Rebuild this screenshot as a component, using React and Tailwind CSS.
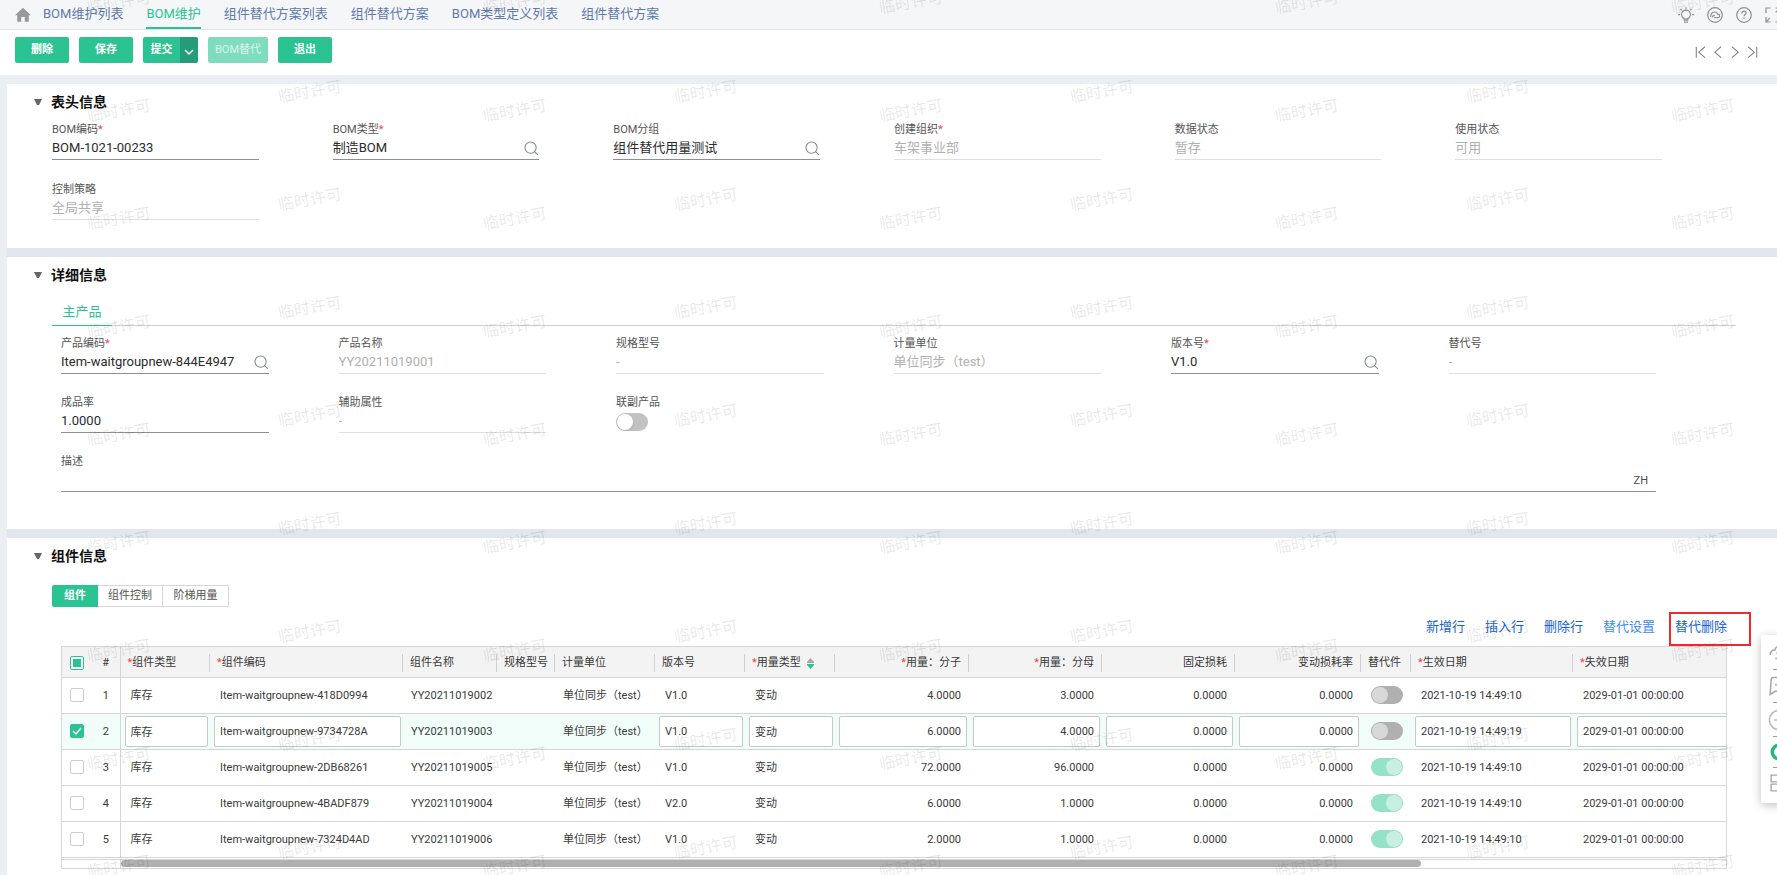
import React, { useState } from "react";
import clsx from "clsx";

const TABS = [
  "BOM维护列表",
  "BOM维护",
  "组件替代方案列表",
  "组件替代方案",
  "BOM类型定义列表",
  "组件替代方案",
];

const HEADER_FIELDS = [
  { id: "bomCode", label: "BOM编码", value: "BOM-1021-00233", required: true },
  { id: "bomType", label: "BOM类型", value: "制造BOM", required: true, search: true },
  { id: "bomGroup", label: "BOM分组", value: "组件替代用量测试", search: true },
  { id: "org", label: "创建组织", value: "车架事业部", required: true, disabled: true },
  { id: "dataStatus", label: "数据状态", value: "暂存", disabled: true },
  { id: "useStatus", label: "使用状态", value: "可用", disabled: true },
  { id: "policy", label: "控制策略", value: "全局共享", disabled: true },
];

const DETAIL_FIELDS = [
  { id: "itemCode", label: "产品编码", value: "Item-waitgroupnew-844E4947", required: true, search: true },
  { id: "itemName", label: "产品名称", value: "YY20211019001", disabled: true },
  { id: "spec", label: "规格型号", value: "-", disabled: true },
  { id: "unit", label: "计量单位", value: "单位同步（test）", disabled: true },
  { id: "version", label: "版本号", value: "V1.0", required: true, search: true },
  { id: "replaceNo", label: "替代号", value: "-", disabled: true },
  { id: "yield", label: "成品率", value: "1.0000" },
  { id: "extra", label: "辅助属性", value: "-", disabled: true },
];

const COLUMNS = [
  { key: "type", label: "组件类型", width: "w-[90px]", required: true, editable: true },
  { key: "code", label: "组件编码", width: "w-[193px]", required: true, editable: true },
  { key: "name", label: "组件名称", width: "w-[94px]" },
  { key: "spec", label: "规格型号", width: "w-[58px]" },
  { key: "unit", label: "计量单位", width: "w-[100px]" },
  { key: "version", label: "版本号", width: "w-[90px]", editable: true },
  { key: "usage", label: "用量类型", width: "w-[90px]", required: true, editable: true, sort: true },
  { key: "num", label: "用量：分子", width: "w-[134px]", required: true, editable: true, right: true },
  { key: "den", label: "用量：分母", width: "w-[133px]", required: true, editable: true, right: true },
  { key: "fixedLoss", label: "固定损耗", width: "w-[133px]", editable: true, right: true },
  { key: "lossRate", label: "变动损耗率", width: "w-[126px]", editable: true, right: true },
  { key: "replace", label: "替代件", width: "w-[50px]", toggle: true },
  { key: "start", label: "生效日期", width: "w-[162px]", required: true, editable: true },
  { key: "end", label: "失效日期", width: "w-[206px]", required: true, editable: true },
];

const row = (code, name, version, num, den, replace, start) => ({
  type: "库存",
  code,
  name,
  spec: "",
  unit: "单位同步（test）",
  version,
  usage: "变动",
  num,
  den,
  fixedLoss: "0.0000",
  lossRate: "0.0000",
  replace,
  start,
  end: "2029-01-01 00:00:00",
});

const ROWS = [
  row("Item-waitgroupnew-418D0994", "YY20211019002", "V1.0", "4.0000", "3.0000", false, "2021-10-19 14:49:10"),
  row("Item-waitgroupnew-9734728A", "YY20211019003", "V1.0", "6.0000", "4.0000", false, "2021-10-19 14:49:19"),
  row("Item-waitgroupnew-2DB68261", "YY20211019005", "V1.0", "72.0000", "96.0000", true, "2021-10-19 14:49:10"),
  row("Item-waitgroupnew-4BADF879", "YY20211019004", "V2.0", "6.0000", "1.0000", true, "2021-10-19 14:49:10"),
  row("Item-waitgroupnew-7324D4AD", "YY20211019006", "V1.0", "2.0000", "1.0000", true, "2021-10-19 14:49:10"),
];

function Icon({ className, children, size = 16 }) {
  return (
    <svg
      viewBox="0 0 16 16"
      width={size}
      height={size}
      fill="none"
      stroke="currentColor"
      strokeWidth="1.2"
      className={clsx("shrink-0", className)}
      aria-hidden="true"
    >
      {children}
    </svg>
  );
}

function TopBar({ active, onChange }) {
  return (
    <nav className="flex h-[30px] items-stretch justify-between overflow-hidden border-b border-[#e2e3e5] bg-[#f5f6f8] pl-[15px]">
      <div className="flex items-stretch">
        <a href="#home" aria-label="首页" className="mr-3 flex items-center text-[#999]">
          <svg viewBox="0 0 16 16" width="16" height="16" fill="currentColor">
            <path d="M8 .8 0 8.2h2.200v6.600h4V10h3.600v4.800h4V8.200H16z" />
          </svg>
        </a>
        <div className="flex items-stretch gap-[23px]">
          {TABS.map((tab, i) => (
            <a
              key={i}
              href="#tab"
              onClick={() => onChange(i)}
              className={clsx(
                "border-b-2 pt-1 text-[13px] leading-5 whitespace-nowrap",
                i === active
                  ? "border-[#2ac391] text-[#2ac391]"
                  : "border-transparent text-[#5f7aab]"
              )}
            >
              {tab}
            </a>
          ))}
        </div>
      </div>
      <div className="-mr-1 flex items-center gap-[13px] text-[#8f8f8f]">
        <button aria-label="提示">
          <Icon>
            <circle cx="8" cy="7.6" r="4.4" />
            <path d="M6.2 11.600v1.600h3.600v-1.600M6 15.200h4M8 .2v1.600M2.400 2l1.300 1.200M13.600 2l-1.300 1.200M0 7.600h2M14 7.600h2" />
          </Icon>
        </button>
        <button aria-label="云服务">
          <Icon>
            <circle cx="8" cy="8" r="7.300" />
            <path d="M3.600 9.800C3.800 6.800 5.600 5 7.800 5c1.500 0 2.500.8 2.800 2.100 1.200 0 2 .9 2 1.800 0 1-.8 1.800-1.900 1.800H7.200M5 10.400c.4-1.400 1.500-2 2.900-2" />
          </Icon>
        </button>
        <button aria-label="帮助">
          <Icon>
            <circle cx="8" cy="8" r="7.300" />
            <path d="M5.900 6.400c0-1.400.9-2.200 2.100-2.200s2.100.8 2.100 1.900c0 1.400-2.100 1.600-2.100 3.200M8 10.600v1.400" />
          </Icon>
        </button>
        <button aria-label="全屏">
          <Icon>
            <path d="M1 6V1h4.500M10.500 1H15v5M15 10v5h-4.500M1 10v5h4.500M1.400 14.600l3.400-3.400M10.600 5.400l4-4" />
          </Icon>
        </button>
      </div>
    </nav>
  );
}

function Toolbar() {
  const btn =
    "h-[26px] rounded-xs bg-[#2ac391] text-[11px] font-semibold text-white";
  return (
    <div className="flex h-[45px] items-start justify-between bg-white pt-[7px] pr-[18px] pl-[15px]">
      <div className="flex gap-[10px]">
        <button className={clsx(btn, "w-[54px]")}>删除</button>
        <button className={clsx(btn, "w-[54px]")}>保存</button>
        <div className="flex">
          <button className={clsx(btn, "w-[37px] rounded-r-none")}>提交</button>
          <button
            aria-label="更多提交操作"
            className="flex h-[26px] w-[18px] items-center justify-center rounded-r-xs bg-[#249c77] pt-1 text-white"
          >
            <svg viewBox="0 0 10 10" width="10" height="10" fill="none" stroke="currentColor" strokeWidth="1.5">
              <path d="m1 3 4 4 4-4" />
            </svg>
          </button>
        </div>
        <button
          disabled
          className="h-[26px] w-[60px] rounded-xs bg-[#7fdcbe] text-[11px] text-[#d9f5ec]"
        >
          BOM替代
        </button>
        <button className={clsx(btn, "w-[54px]")}>退出</button>
      </div>
      <div className="flex gap-[3px] pt-2 text-[#808080]">
        <button aria-label="第一条">
          <Icon size={14}>
            <path d="M2.600 2v12.500M12.500 2 5.400 8.200l7.100 6.300" />
          </Icon>
        </button>
        <button aria-label="上一条">
          <Icon size={14}>
            <path d="M11.500 2 4.400 8.200l7.100 6.300" />
          </Icon>
        </button>
        <button aria-label="下一条">
          <Icon size={14}>
            <path d="M4.500 2l7.100 6.200-7.100 6.300" />
          </Icon>
        </button>
        <button aria-label="最后一条">
          <Icon size={14}>
            <path d="M3.500 2l7.100 6.200-7.100 6.300M13.400 2v12.500" />
          </Icon>
        </button>
      </div>
    </div>
  );
}

function Section({ title, className, children }) {
  return (
    <section className={clsx("bg-white pt-2 pl-[27px]", className)}>
      <h2 className="flex items-center text-[14px] leading-5 font-bold text-[#111]">
        <svg viewBox="0 0 8 6" width="8" height="6" className="mr-[9px]" fill="#666">
          <path d="M0 0h8L5 6H3z" />
        </svg>
        {title}
      </h2>
      {children}
    </section>
  );
}

const labelClass =
  "block h-4 text-[11px] leading-[18px] whitespace-nowrap text-[#555]";

function Field({ id, label, value, required, disabled, search }) {
  return (
    <div>
      <label htmlFor={id} className={labelClass}>
        {label}
        {required && <span className="text-[#f5413d]">*</span>}
      </label>
      <div
        className={clsx(
          "flex h-[23px] items-center border-b",
          disabled ? "border-[#e0e0e0]" : "border-[#8f8f8f]"
        )}
      >
        <input
          id={id}
          defaultValue={value}
          disabled={disabled}
          className={clsx(
            "min-w-0 flex-1 bg-transparent text-[13px] leading-5 outline-none",
            disabled ? "text-[#b0b0b0]" : "text-[#2b2b2b]"
          )}
        />
        {search && (
          <button aria-label={`选择${label}`} className="text-[#7d8694]">
            <svg viewBox="0 0 16 16" width="15" height="15" fill="none" stroke="currentColor" strokeWidth="1.1">
              <circle cx="7" cy="7" r="6" />
              <path d="m11.200 11.400 3.600 3.400" />
            </svg>
          </button>
        )}
      </div>
    </div>
  );
}

function Toggle({ id, label, checked, disabled }) {
  return (
    <input
      id={id}
      type="checkbox"
      role="switch"
      aria-label={label}
      defaultChecked={checked}
      disabled={disabled}
      className={clsx(
        "block h-[18px] w-8 appearance-none rounded-full p-px before:block before:size-4 before:rounded-full checked:before:ml-[14px]",
        disabled
          ? "bg-[#b0b0b0] before:bg-[#d8d8d8] checked:bg-[#94e2c8] checked:before:bg-[#c9efe2]"
          : "bg-[#c2c2c2] before:bg-white before:shadow checked:bg-[#2ac391]"
      )}
    />
  );
}

function CheckBox({ label, checked, partial, onChange }) {
  return (
    <span className="relative ml-2 block size-[14px]">
      <input
        type="checkbox"
        aria-label={label}
        checked={checked}
        onChange={onChange}
        className={clsx(
          "block size-[14px] appearance-none rounded-xs border bg-white",
          partial ? "border-[#2ac391]" : "border-[#cfcfcf]",
          "checked:border-[#2ac391] checked:bg-[#2ac391]"
        )}
      />
      {partial && (
        <span className="pointer-events-none absolute inset-[3px] bg-[#2ac391]" />
      )}
      {checked && (
        <svg
          viewBox="0 0 14 14"
          className="pointer-events-none absolute inset-0 size-[14px]"
          fill="none"
          stroke="#fff"
          strokeWidth="1.4"
        >
          <path d="m3 7 3 3 5-6" />
        </svg>
      )}
    </span>
  );
}

function Cell({ column, data, editing, index }) {
  if (column.toggle) {
    return (
      <td className="pl-[10px]">
        <Toggle label={`第${index + 1}行替代件`} checked={data.replace} disabled />
      </td>
    );
  }
  if (editing && column.editable) {
    return (
      <td className="pr-[2px] pl-1">
        <input
          aria-label={column.label}
          defaultValue={data[column.key]}
          className={clsx(
            "block h-[31px] w-full rounded-xs border border-[#c8c8c8] bg-white px-[5px] outline-none",
            column.right && "text-right"
          )}
        />
      </td>
    );
  }
  return (
    <td
      className={clsx(
        "pt-[2px] whitespace-nowrap",
        column.right ? "pr-2 text-right" : column.editable ? "pl-[10px]" : "pl-2"
      )}
    >
      {data[column.key]}
    </td>
  );
}

function ComponentTable() {
  const [selected, setSelected] = useState([1]);

  const toggleRow = (i) => {
    setSelected(
      selected.includes(i) ? selected.filter((s) => s !== i) : [...selected, i]
    );
  };
  const all = selected.length === ROWS.length;

  return (
    <div className="overflow-hidden border border-[#d6d6d6]">
      <table className="w-[1717px] table-fixed border-collapse text-[11px] text-[#3a3a3a]">
        <thead>
          <tr className="h-[30px] border-b border-[#d6d6d6] bg-[#f3f3f3]">
            <th className="w-[30px] pt-[3px]">
              <CheckBox
                label="全选"
                checked={all}
                partial={!all && selected.length > 0}
                onChange={() => setSelected(all ? [] : ROWS.map((_, i) => i))}
              />
            </th>
            <th className="w-[28px] border-r border-[#d6d6d6] pt-[3px] font-normal">#</th>
            {COLUMNS.map((c) => (
              <th key={c.key} className={clsx("pt-[3px] font-normal", c.width)}>
                <div
                  className={clsx(
                    "flex h-[18px] items-center border-r border-[#d0d0d0] px-[7px] whitespace-nowrap",
                    c.right && "justify-end"
                  )}
                >
                  {c.required && <span className="text-[#f5413d]">*</span>}
                  {c.label}
                  {c.sort && (
                    <svg viewBox="0 0 7 11" width="7" height="11" className="ml-[6px]">
                      <path d="M3.500 0 7 4v1H0V4z" fill="#a8a8a8" />
                      <path d="M3.500 11 7 7V6H0v1z" fill="#2ac391" />
                    </svg>
                  )}
                </div>
              </th>
            ))}
          </tr>
        </thead>
        <tbody>
          {ROWS.map((r, i) => (
            <tr
              key={r.code}
              className={clsx(
                "h-9 border-b border-[#d6d6d6]",
                i === 1 ? "bg-[#f1fdf8]" : "bg-white"
              )}
            >
              <td>
                <CheckBox
                  label={`选择第${i + 1}行`}
                  checked={selected.includes(i)}
                  onChange={() => toggleRow(i)}
                />
              </td>
              <td className="border-r border-[#d6d6d6] pt-[2px] text-center">{i + 1}</td>
              {COLUMNS.map((c) => (
                <Cell key={c.key} column={c} data={r} editing={i === 1} index={i} />
              ))}
            </tr>
          ))}
        </tbody>
      </table>
      <div className="mt-px flex h-[9px] border-t border-[#d6d6d6]">
        <div className="h-full w-[59px] border-r border-[#d6d6d6]" />
        <div className="flex-1">
          <div className="h-[7px] w-[81%] rounded-full bg-[#b0b0b0]" />
        </div>
      </div>
    </div>
  );
}

function ComponentSection() {
  const seg = "h-[22px] border border-[#d6d6d6] text-[11px] text-[#555]";
  const link = "text-[#1762d6]";
  return (
    <Section title="组件信息" className="flex-1 pb-1">
      <div className="mt-[19px] ml-[18px] flex">
        <button className="h-[22px] w-[46px] rounded-l-xs bg-[#2ac391] text-[11px] font-semibold text-white">
          组件
        </button>
        <button className={clsx(seg, "w-16 border-x-0")}>组件控制</button>
        <button className={clsx(seg, "w-[67px] rounded-r-xs")}>阶梯用量</button>
      </div>
      <div className="ml-[27px] pr-[50px]">
        <div className="flex h-[39px] items-center justify-end gap-5 text-[13px]">
          <a href="#add" className={link}>新增行</a>
          <a href="#insert" className={link}>插入行</a>
          <a href="#remove" className={link}>删除行</a>
          <a href="#replace" className="text-[#3d8bf5]">替代设置</a>
          <span className="relative">
            <a href="#replace-remove" className={link}>替代删除</a>
            <span className="pointer-events-none absolute -top-[5px] -right-6 -left-[6px] h-[34px] border-2 border-[#ee2a2f]" />
          </span>
        </div>
        <ComponentTable />
      </div>
    </Section>
  );
}

function SidePanel() {
  const line = <span className="h-px w-3 bg-[#9a9a9a]" />;
  return (
    <aside className="absolute top-[635px] -right-5 flex h-[168px] w-9 flex-col items-center justify-between rounded-l-xs bg-white pt-2 pb-[11px] text-[#a5a5a5] shadow-[0_2px_10px_rgba(0,0,0,0.25)]">
      <button aria-label="云端">
        <Icon size={20}>
          <path d="M.8 9.600C.8 7 2.600 5.400 4.600 5.600 5.200 3.600 6.600 2.600 8.400 2.600s3.200 1.100 3.600 3c2 0 3.300 1.600 3.300 3.600M6 8.400 8 6.600l2 1.800M8 7v5M5 12.400h6" />
        </Icon>
      </button>
      {line}
      <button aria-label="消息">
        <Icon size={20}>
          <path d="M2.600 1.200H15v11H5L.900 14.800 1.800 2.200z" />
          <path d="M5 7h1.200M8 7h1.200M11 7h1.200" strokeWidth="1.600" />
        </Icon>
      </button>
      {line}
      <button aria-label="收起" className="text-[#bdbdbd]">
        <Icon size={22}>
          <circle cx="8" cy="8" r="7" />
          <path d="M4.500 8h7" />
        </Icon>
      </button>
      {line}
      <button aria-label="在线服务" className="text-[#25b873]">
        <Icon size={18}>
          <circle cx="8" cy="8" r="6" strokeWidth="3" />
        </Icon>
      </button>
      {line}
      <button aria-label="应用">
        <Icon size={18}>
          <path d="M1 1h6v6H1zM9 1h6v6H9zM1 9h6v6H1zM9 9h6v6H9z" />
        </Icon>
      </button>
    </aside>
  );
}

// two interleaved grids of tilted text laid over the whole page
function Watermark() {
  const marks = Array.from({ length: 45 });
  const grid =
    "absolute grid auto-rows-[108px] grid-cols-[repeat(5,396px)] text-[16px] text-black/10";
  const mark = (_, i) => (
    <span key={i} className="flex items-center justify-center">
      <span className="-rotate-10">临时许可</span>
    </span>
  );
  return (
    <div aria-hidden="true" className="pointer-events-none absolute inset-0 overflow-hidden select-none">
      <div className={clsx(grid, "-top-[51px] -left-[79px]")}>{marks.map(mark)}</div>
      <div className={clsx(grid, "-top-[70px] left-[112px]")}>{marks.map(mark)}</div>
    </div>
  );
}

export default function App() {
  const [active, setActive] = useState(1);

  return (
    <div className="relative flex min-h-screen flex-col overflow-hidden bg-[#ebeef3] font-[Roboto,'Noto_Sans_CJK_SC',sans-serif]">
      <TopBar active={active} onChange={setActive} />
      <Toolbar />
      <main className="mt-[9px] ml-[7px] flex flex-1 flex-col gap-[9px] bg-[#e1e6ef]">
        <Section title="表头信息" className="pb-7">
          <div className="mt-[9px] ml-[18px] grid grid-cols-6 gap-x-[74px] gap-y-[21px] pr-[115px]">
            {HEADER_FIELDS.map((f) => (
              <Field key={f.id} {...f} />
            ))}
          </div>
        </Section>

        <Section title="详细信息" className="pb-[37px]">
          <div className="mt-[13px] mr-[41px] ml-[18px] flex border-b border-[#d0d0d0]">
            <button className="-mb-px h-[28px] w-[60px] border-b border-[#2ac391] text-[13px] text-[#2ac391]">
              主产品
            </button>
          </div>
          <div className="mt-[9px] ml-[27px] grid grid-cols-6 gap-x-[70px] gap-y-5 pr-[121px]">
            {DETAIL_FIELDS.map((f) => (
              <Field key={f.id} {...f} />
            ))}
            <div>
              <label htmlFor="joint" className={clsx(labelClass, "mb-[3px]")}>
                联副产品
              </label>
              <Toggle id="joint" />
            </div>
            <div className="col-span-6">
              <label htmlFor="desc" className={labelClass}>
                描述
              </label>
              <div className="flex h-[23px] items-end border-b border-[#8f8f8f] pr-2">
                <input id="desc" className="min-w-0 flex-1 bg-transparent text-[13px] text-[#2b2b2b] outline-none" />
                <button className="pb-[2px] text-[11px] text-[#444b57]">ZH</button>
              </div>
            </div>
          </div>
        </Section>

        <ComponentSection />
      </main>
      <SidePanel />
      <Watermark />
    </div>
  );
}
